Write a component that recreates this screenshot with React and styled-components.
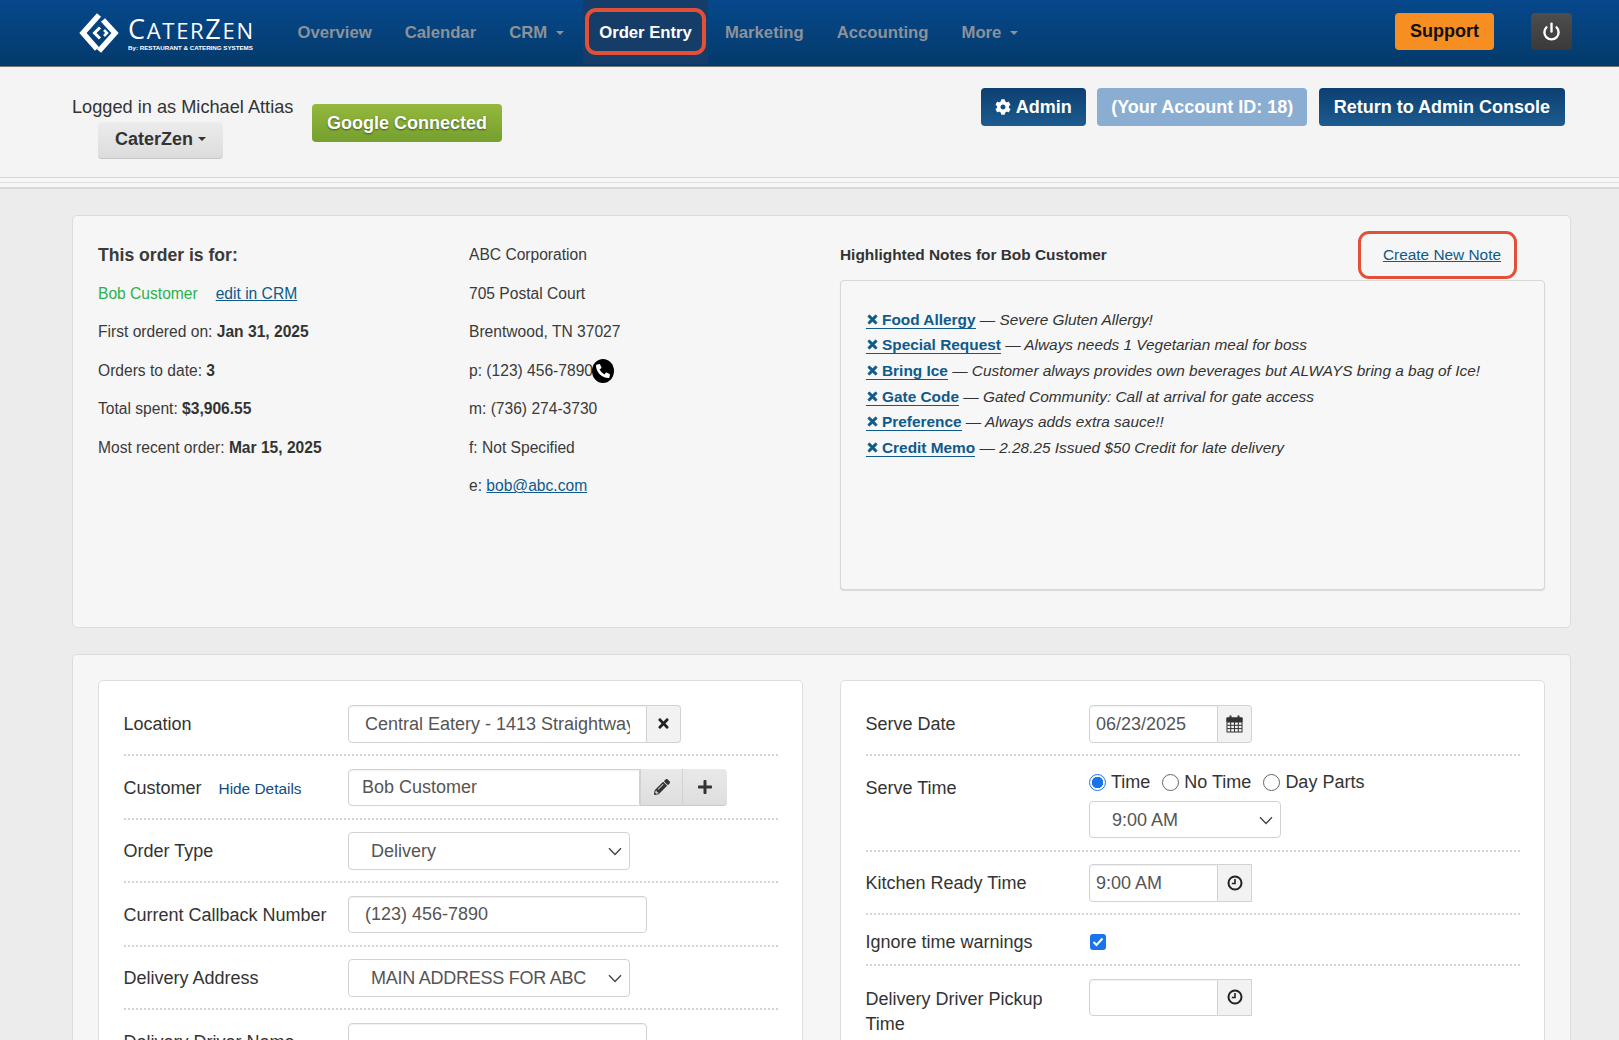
import styled, { createGlobalStyle } from "styled-components"
import { FaCog, FaTimes, FaPencilAlt, FaPlus, FaPhoneAlt } from "react-icons/fa"
import { FiPower } from "react-icons/fi"

const GlobalStyle = createGlobalStyle`
html, body {
  margin: 0;
  height: 1040px;
  overflow: hidden;
  background: #ececec;
  font-family: "Liberation Sans", Arial, sans-serif;
  color: #333;
}
* { box-sizing: border-box; }
`

const Nav = styled.div`
height: 67px;
display: flex;
align-items: flex-start;
padding-left: 79px;
padding-right: 47px;
background: linear-gradient(#06488c, #043a6b);
border-bottom: 1px solid #777;
`
const Logo = styled.div`
width: 202px;
height: 66px;
display: flex;
align-items: center;
gap: 9px;
`
const LogoText = styled.div`
display: flex;
flex-direction: column;
color: #fff;
`
const LogoName = styled.div`
font-family: "Open Sans", sans-serif;
font-size: 27px;
line-height: 27px;
letter-spacing: 1.7px;
font-weight: 400;
white-space: nowrap;
small { font-size: 22px; }
`
const LogoTag = styled.div`
font-size: 6.2px;
line-height: 7px;
font-weight: 700;
white-space: nowrap;
`
const NavList = styled.div`
display: flex;
flex: 1;
`
const NavItem = styled.div`
position: relative;
height: 64px;
padding: 1px 16.5px 0;
display: flex;
align-items: center;
gap: 9px;
font-size: 16.7px;
font-weight: 700;
white-space: nowrap;
color: ${p => (p.$active ? "#fff" : "#8c9299")};
background: ${p => (p.$active ? "#163c68" : "transparent")};
`
const Caret = styled.span`
width: 0;
height: 0;
margin-right: ${p => p.$after || 0}px;
border-left: 4.5px solid transparent;
border-right: 4.5px solid transparent;
border-top: 4.5px solid ${p => p.$color || "#8c9299"};
`
const RedBox = styled.div`
position: absolute;
border: 4px solid #e2503a;
border-radius: 11px;
pointer-events: none;
`
const NavRing = styled(RedBox)`
left: 2px;
right: 2px;
top: 8px;
bottom: 9px;
`
const NavButton = styled.div`
height: 37px;
margin-top: 13px;
display: flex;
align-items: center;
justify-content: center;
border-radius: 4px;
font-weight: 700;
`
const Support = styled(NavButton)`
width: 99px;
margin-right: 37px;
background: #f68e22;
color: #111;
font-size: 18px;
`
const Power = styled(NavButton)`
width: 41px;
background: linear-gradient(#4d4d4d, #3a3a3a);
color: #fff;
font-size: 19px;
svg { stroke-width: 3; }
`
const SubHeader = styled.div`
height: 110px;
padding: 0 54px 0 72px;
display: flex;
justify-content: space-between;
background: #f4f4f4;
`
const UserBlock = styled.div`
padding-top: 30px;
display: flex;
align-items: flex-start;
gap: 18px;
`
const Who = styled.div`
width: 222px;
display: flex;
flex-direction: column;
font-size: 18.2px;
line-height: 20px;
white-space: nowrap;
`
const AccountButton = styled.div`
margin: 5px 0 0 26px;
padding-bottom: 2px;
width: 125px;
height: 37px;
border-radius: 4px;
display: flex;
align-items: center;
justify-content: center;
gap: 5px;
background: linear-gradient(#ececec, #dcdcdc);
border-bottom: 1px solid #c4c4c4;
font-size: 18px;
font-weight: 700;
`
const GoogleButton = styled.div`
margin-top: 7px;
width: 190px;
height: 38px;
border-radius: 4px;
display: flex;
align-items: center;
justify-content: center;
background: linear-gradient(#95b83d, #74a02e);
color: #fff;
font-size: 18px;
font-weight: 700;
text-shadow: 0 1px 2px rgba(0, 0, 0, 0.5);
`
const AdminButtons = styled.div`
padding-top: 21px;
display: flex;
align-items: flex-start;
gap: 11.5px;
`
const BlueButton = styled.div`
height: 38px;
padding: 0 ${p => p.$pad || 15}px;
border-radius: 4px;
display: flex;
align-items: center;
gap: 5px;
color: #fff;
font-size: 18px;
font-weight: 700;
white-space: nowrap;
background: ${p => (p.$muted ? "#8aaed2" : "linear-gradient(#0c3f70, #1d5b8f)")};
`
const Rule = styled.div`
height: 12px;
border-top: 1px solid #d6d6d6;
border-bottom: 2px solid #d8d8d8;
background: linear-gradient(#f6f6f6 40%, #dcdcdc 40%, #dcdcdc 52%, #f6f6f6 52%);
`
const Main = styled.div`
padding: 26px 48px 0 72px;
display: flex;
flex-direction: column;
gap: 26px;
`
const Card = styled.div`
padding: 25px 25px 0;
background: #f6f6f6;
border: 1px solid #dcdcdc;
border-radius: 5px;
display: grid;
grid-template-columns: ${p => p.$columns};
column-gap: ${p => p.$gap || 0}px;
`
const SummaryCard = styled(Card)`
height: 413px;
padding-top: 20px;
`
const InfoColumn = styled.div`
display: flex;
flex-direction: column;
`
const InfoRow = styled.div`
height: 38.5px;
display: flex;
align-items: center;
font-size: 15.6px;
white-space: pre;
color: #3a3a3a;
b { font-weight: 700; color: #333; }
`
const OrderTitle = styled(InfoRow)`
font-size: 17.6px;
font-weight: 700;
`
const Green = styled.span`
color: #2db14c;
margin-right: 18px;
`
const Link = styled.a`
color: #0f5a8a;
text-decoration: underline;
`
const PhoneBadge = styled.span`
width: 22px;
height: 24px;
margin-left: -1px;
border-radius: 50%;
background: #000;
color: #fff;
font-size: 14px;
display: inline-flex;
align-items: center;
justify-content: center;
`
const NotesColumn = styled.div`
display: flex;
flex-direction: column;
`
const NotesHead = styled.div`
height: 38px;
padding-right: 44px;
display: flex;
align-items: center;
justify-content: space-between;
font-size: 15.4px;
font-weight: 700;
`
const NoteLink = styled.div`
position: relative;
font-weight: 400;
`
const NoteRing = styled(RedBox)`
left: -25px;
right: -16px;
top: -15px;
bottom: -15px;
border-width: 3.5px;
`
const NotesBox = styled.div`
margin-top: 6px;
height: 310px;
padding: 26px 25px;
background: #f7f7f7;
border: 1px solid #d8d8d8;
border-radius: 4px;
box-shadow: 0 1px 1px rgba(0, 0, 0, 0.12);
`
const NoteRow = styled.div`
height: 25.6px;
display: flex;
align-items: center;
font-size: 15.4px;
font-style: italic;
white-space: pre;
color: #333;
`
const NoteName = styled.a`
display: inline-flex;
align-items: center;
gap: 3px;
font-style: normal;
font-weight: 700;
color: #0f5a8a;
line-height: 17px;
border-bottom: 1px solid #0f5a8a;
svg { font-size: 13px; stroke: currentColor; stroke-width: 30; }
`
const Panel = styled.div`
height: 400px;
padding: 24px 24.5px;
background: #fff;
border: 1px solid #dedede;
border-radius: 5px;
`
const RightPanel = styled(Panel)`
--label-col: 223.5px;
`
const Row = styled.div`
display: grid;
grid-template-columns: var(--label-col, 224.5px) 1fr;
padding-bottom: 11.5px;
margin-bottom: 12.5px;
border-bottom: 2px dotted #d4d4d4;
`
const LastRow = styled(Row)`
border-bottom: 0;
`
const Label = styled.div`
padding-top: 2px;
display: flex;
align-items: center;
gap: 17px;
font-size: 18px;
line-height: 25px;
color: #333;
min-height: 37px;
white-space: nowrap;
`
const TopLabel = styled(Label)`
align-items: flex-start;
padding-top: ${p => p.$top || 7}px;
white-space: normal;
width: 200px;
`
const CheckLabel = styled(Label)`
min-height: 26px;
`
const HideLink = styled.span`
font-size: 15.4px;
color: #0f4c81;
`
const Group = styled.div`
display: flex;
height: 37.5px;
`
const Field = styled.div`
width: ${p => p.$width}px;
height: 37.5px;
padding: ${p => (p.$low ? 2 : 0)}px ${p => p.$pad ?? 16}px 0;
display: flex;
align-items: center;
background: #fff;
border: 1px solid #d2d2d2;
border-radius: ${p => (p.$joined ? "4px 0 0 4px" : "4px")};
font-size: 18px;
color: #555;
white-space: nowrap;
overflow: hidden;
box-shadow: inset 0 1px 1px rgba(0, 0, 0, 0.06);
`
const Clip = styled.span`
display: block;
overflow: hidden;
`
const Select = styled(Field)`
justify-content: space-between;
padding: 2px 7px 0 22px;
box-shadow: none;
`
const Tight = styled.span`
letter-spacing: -0.25px;
`
const Chevron = () => (
  <svg width="14" height="9" viewBox="0 0 14 9" fill="none" stroke="#444" strokeWidth="1.4">
    <path d="M1 1.2 L7 7.4 L13 1.2" />
  </svg>
)
const Addon = styled.div`
width: 34px;
display: flex;
align-items: center;
justify-content: center;
background: #f2f2f2;
border: 1px solid #d2d2d2;
border-left: 0;
border-radius: ${p => (p.$square ? "0" : "0 4px 4px 0")};
font-size: 15px;
color: #222;
`
const ToolAddon = styled.div`
width: ${p => p.$width}px;
display: flex;
align-items: center;
justify-content: center;
background: linear-gradient(#e9e9e9, #dedede);
border-bottom: 1px solid #c8c8c8;
border-left: 1px solid #d2d2d2;
border-radius: ${p => (p.$last ? "0 4px 4px 0" : "0")};
font-size: 16px;
color: #333;
`
const Radios = styled.div`
height: 26px;
margin-bottom: 6px;
padding-top: 2px;
display: flex;
align-items: center;
font-size: 18px;
color: #333;
`
const Radio = styled.span`
width: 17px;
height: 17px;
margin-left: ${p => p.$gap || 0}px;
margin-right: 5px;
border-radius: 50%;
border: ${p => (p.$on ? "1.5px solid #1a73e8" : "1px solid #666")};
background: ${p => (p.$on ? "radial-gradient(#1a73e8 0 5.5px, #fff 6px)" : "#fff")};
`
const Check = styled.span`
width: 16px;
height: 16px;
margin-left: 1px;
border-radius: 3px;
background: #1a73e8;
display: flex;
align-items: center;
justify-content: center;
`
const CheckCell = styled.div`
padding-top: 2px;
display: flex;
align-items: center;
`
const ShortRow = styled(Row)`
padding-bottom: 9.5px;
`

const LogoMark = () => (
  <svg width="40" height="42" viewBox="0 0 40 42" fill="none" stroke="#fff" strokeWidth="5.5">
    <path d="M20 3 L4 21 L18 37" />
    <path d="M24 8 L36 21 L20 39" />
    <path d="M21 15.5 L15.5 21 L21 26.5" strokeWidth="3" />
    <path d="M25 18 L28 21 L25 24" strokeWidth="2.5" />
  </svg>
)
const CalendarIcon = () => (
  <svg width="17" height="18" viewBox="0 0 17 18" fill="none" stroke="#333" strokeWidth="1">
    <rect x="1" y="3" width="15" height="14" />
    <path d="M1 3 H16 V7 H1 Z" fill="#333" />
    <path d="M1 10.3 H16 M1 13.6 H16 M4.7 7 V17 M8.5 7 V17 M12.3 7 V17" />
    <path d="M4.5 0.5 V4 M12.5 0.5 V4" strokeWidth="2" />
  </svg>
)
const ClockIcon = () => (
  <svg width="16" height="16" viewBox="0 0 16 16" fill="none" stroke="#222">
    <circle cx="8" cy="8" r="6.5" strokeWidth="2" />
    <path d="M8 4 V8.5 H4.8" strokeWidth="1.6" />
  </svg>
)

const notes = [
  ["Food Allergy", "Severe Gluten Allergy!"],
  ["Special Request", "Always needs 1 Vegetarian meal for boss"],
  ["Bring Ice", "Customer always provides own beverages but ALWAYS bring a bag of Ice!"],
  ["Gate Code", "Gated Community: Call at arrival for gate access"],
  ["Preference", "Always adds extra sauce!!"],
  ["Credit Memo", "2.28.25 Issued $50 Credit for late delivery"],
]

const App = () => {
  return (
    <>
      <GlobalStyle />
      <Nav>
        <Logo>
          <LogoMark />
          <LogoText>
            <LogoName>C<small>ATER</small>Z<small>EN</small></LogoName>
            <LogoTag>By: RESTAURANT &amp; CATERING SYSTEMS</LogoTag>
          </LogoText>
        </Logo>
        <NavList>
          <NavItem>Overview</NavItem>
          <NavItem>Calendar</NavItem>
          <NavItem>CRM <Caret $after={2} /></NavItem>
          <NavItem $active>Order Entry<NavRing /></NavItem>
          <NavItem>Marketing</NavItem>
          <NavItem>Accounting</NavItem>
          <NavItem>More <Caret /></NavItem>
        </NavList>
        <Support>Support</Support>
        <Power><FiPower /></Power>
      </Nav>
      <SubHeader>
        <UserBlock>
          <Who>
            Logged in as Michael Attias
            <AccountButton>CaterZen <Caret $color="#333" /></AccountButton>
          </Who>
          <GoogleButton>Google Connected</GoogleButton>
        </UserBlock>
        <AdminButtons>
          <BlueButton $pad={14}><FaCog size={16} /> Admin</BlueButton>
          <BlueButton $muted $pad={14}>(Your Account ID: 18)</BlueButton>
          <BlueButton>Return to Admin Console</BlueButton>
        </AdminButtons>
      </SubHeader>
      <Rule />
      <Main>
        <SummaryCard $columns="371px 371px 705px">
          <InfoColumn>
            <OrderTitle>This order is for:</OrderTitle>
            <InfoRow><Green>Bob Customer</Green><Link>edit in CRM</Link></InfoRow>
            <InfoRow>First ordered on: <b>Jan 31, 2025</b></InfoRow>
            <InfoRow>Orders to date: <b>3</b></InfoRow>
            <InfoRow>Total spent: <b>$3,906.55</b></InfoRow>
            <InfoRow>Most recent order: <b>Mar 15, 2025</b></InfoRow>
          </InfoColumn>
          <InfoColumn>
            <InfoRow>ABC Corporation</InfoRow>
            <InfoRow>705 Postal Court</InfoRow>
            <InfoRow>Brentwood, TN 37027</InfoRow>
            <InfoRow>p: (123) 456-7890<PhoneBadge><FaPhoneAlt /></PhoneBadge></InfoRow>
            <InfoRow>m: (736) 274-3730</InfoRow>
            <InfoRow>f: Not Specified</InfoRow>
            <InfoRow>e: <Link>bob@abc.com</Link></InfoRow>
          </InfoColumn>
          <NotesColumn>
            <NotesHead>
              Highlighted Notes for Bob Customer
              <NoteLink><Link>Create New Note</Link><NoteRing /></NoteLink>
            </NotesHead>
            <NotesBox>
              {notes.map(([name, text]) => (
                <NoteRow key={name}>
                  <NoteName><FaTimes />{name}</NoteName> — {text}
                </NoteRow>
              ))}
            </NotesBox>
          </NotesColumn>
        </SummaryCard>
        <Card $columns="705px 705px" $gap={37}>
          <Panel>
            <Row>
              <Label>Location</Label>
              <Group>
                <Field $width={299} $low $joined><Clip>Central Eatery - 1413 Straightway Ave</Clip></Field>
                <Addon><FaTimes /></Addon>
              </Group>
            </Row>
            <Row>
              <Label>Customer <HideLink>Hide Details</HideLink></Label>
              <Group>
                <Field $width={292} $pad={13} $joined>Bob Customer</Field>
                <ToolAddon $width={42}><FaPencilAlt /></ToolAddon>
                <ToolAddon $width={45} $last><FaPlus /></ToolAddon>
              </Group>
            </Row>
            <Row>
              <Label>Order Type</Label>
              <Select $width={282}>Delivery<Chevron /></Select>
            </Row>
            <Row>
              <Label>Current Callback Number</Label>
              <Field $width={299}>(123) 456-7890</Field>
            </Row>
            <Row>
              <Label>Delivery Address</Label>
              <Select $width={282}><Tight>MAIN ADDRESS FOR ABC</Tight><Chevron /></Select>
            </Row>
            <LastRow>
              <TopLabel>Delivery Driver Name</TopLabel>
              <Field $width={299} />
            </LastRow>
          </Panel>
          <RightPanel>
            <Row>
              <Label>Serve Date</Label>
              <Group>
                <Field $width={129} $pad={6} $low $joined>06/23/2025</Field>
                <Addon><CalendarIcon /></Addon>
              </Group>
            </Row>
            <Row>
              <TopLabel>Serve Time</TopLabel>
              <div>
                <Radios>
                  <Radio $on />Time
                  <Radio $gap={12} />No Time
                  <Radio $gap={12} />Day Parts
                </Radios>
                <Select $width={192}>9:00 AM<Chevron /></Select>
              </div>
            </Row>
            <Row>
              <Label>Kitchen Ready Time</Label>
              <Group>
                <Field $width={129} $pad={6} $low $joined>9:00 AM</Field>
                <Addon $square><ClockIcon /></Addon>
              </Group>
            </Row>
            <ShortRow>
              <CheckLabel>Ignore time warnings</CheckLabel>
              <CheckCell>
                <Check>
                  <svg width="12" height="10" viewBox="0 0 12 10" fill="none" stroke="#fff" strokeWidth="2">
                    <path d="M1.5 5 L4.5 8 L10.5 1.5" />
                  </svg>
                </Check>
              </CheckCell>
            </ShortRow>
            <LastRow>
              <TopLabel $top={8}>Delivery Driver Pickup Time</TopLabel>
              <Group>
                <Field $width={129} $pad={6} $joined />
                <Addon $square><ClockIcon /></Addon>
              </Group>
            </LastRow>
          </RightPanel>
        </Card>
      </Main>
    </>
  )
}

export default App
